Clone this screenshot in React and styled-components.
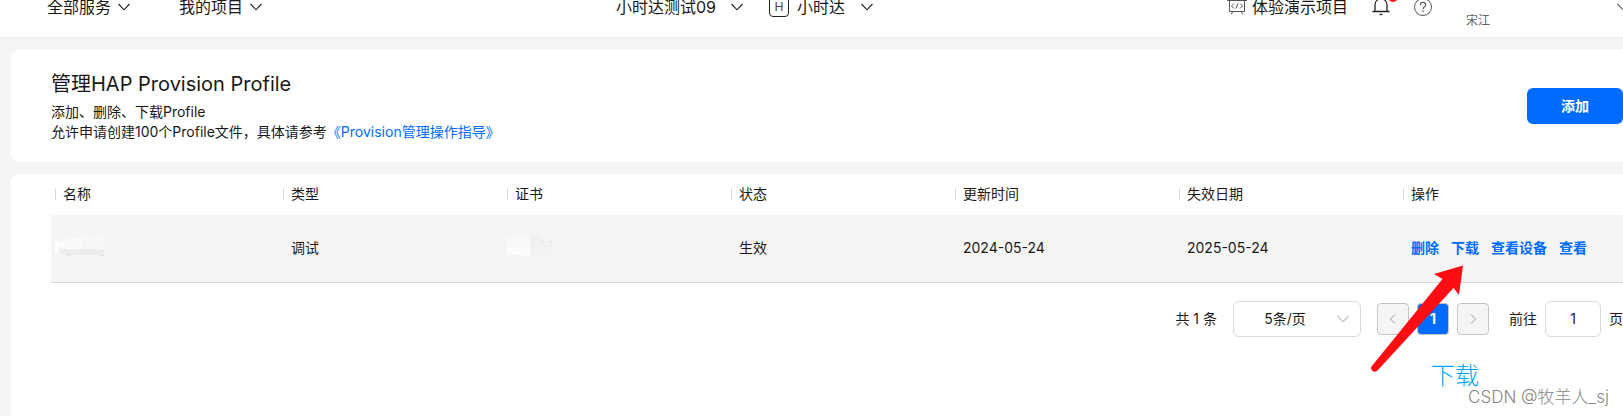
import { useState } from "react";
import styled, { createGlobalStyle } from "styled-components";

const columns = ["名称", "类型", "证书", "状态", "更新时间", "失效日期", "操作"];

const profiles = [
  {
    id: 1,
    type: "调试",
    status: "生效",
    updated: "2024-05-24",
    expires: "2025-05-24",
  },
];

const actions = ["删除", "下载", "查看设备", "查看"];

const Chevron = ({ size = 12, color = "#222" }) => (
  <svg width={size} height={size} viewBox="0 0 12 12" fill="none">
    <path d="M0.5 3L6 8.8L11.5 3" stroke={color} strokeWidth="1.1" />
  </svg>
);

const BoardIcon = () => (
  <svg width="20" height="20" viewBox="0 0 20 20" fill="none" stroke="#555">
    <path d="M0 3.5H20M2.5 3.5V14.5H17.5V3.5M6 14.5L4 17.5M14 14.5L16 17.5" />
    <path d="M7 6.5L4.5 9L7 11.5M13 6.5L15.5 9L13 11.5M11 6.5L9 11.5" />
  </svg>
);

const BellIcon = () => (
  <svg width="18" height="20" viewBox="0 0 18 20" fill="none" stroke="#222">
    <path
      d="M0.5 14.5H17.5M3 14.5V8C3 4.5 5.5 2 9 2S15 4.5 15 8V14.5"
      strokeWidth="1.3"
    />
    <path d="M7.5 17.5H10.5" strokeWidth="1.3" />
  </svg>
);

const HelpIcon = () => (
  <svg width="18" height="18" viewBox="1 1 18 18" fill="none" stroke="#555">
    <circle cx="10" cy="10" r="8.5" />
    <path
      d="M7.3 8.2C7.3 6.4 8.5 5.4 10 5.4S12.7 6.4 12.7 8C12.7 9.9 10 10 10 12.2"
      strokeWidth="1.1"
    />
    <path d="M10 13.6V15" strokeWidth="1.3" />
  </svg>
);

const NameMask = () => (
  <svg width="50" height="20" viewBox="0 0 50 20">
    <path d="M4 6L12 3L27 1V14H4Z" fill="#fafafa" />
    <path d="M27 1L49 0V14H27Z" fill="#f7f7f7" />
    <path d="M4 13H49V19H10L4 17Z" fill="#ededed" />
    <rect y="5" width="4" height="11" rx="1" fill="#fff" />
    <path d="M12 19.5H16M44 19.5H50" stroke="#e2e2e2" />
  </svg>
);

const CertMask = () => (
  <svg width="46" height="22" viewBox="0 0 46 22">
    <path d="M0 3L23 0V21L0 19Z" fill="#f9f9f9" />
    <path d="M0 12H23V21L0 19Z" fill="#fcfcfc" />
    <path d="M23 0H32L35 6H46V21H23Z" fill="#f1f1f1" />
    <path d="M23 12H46V21H23Z" fill="#f3f3f3" />
    <path d="M35 6.5H37M43 6.5H45" stroke="#d8d8d8" />
  </svg>
);

const App = () => {
  const [page, setPage] = useState("1");

  return (
    <Page>
      <GlobalStyle />
      <Header>
        <Group $gap="49px">
          <MenuButton>
            全部服务
            <Chevron />
          </MenuButton>
          <MenuButton>
            我的项目
            <Chevron />
          </MenuButton>
        </Group>
        <Group $gap="26px">
          <MenuButton $gap="15px">
            小时达测试09
            <Chevron />
          </MenuButton>
          <MenuButton $gap="16px">
            <AppName>
              <Badge>H</Badge>
              小时达
            </AppName>
            <Chevron />
          </MenuButton>
        </Group>
        <RightGroup>
          <MenuButton $gap="5px">
            <BoardIcon />
            体验演示项目
          </MenuButton>
          <IconButton aria-label="消息">
            <BellIcon />
            <Dot />
          </IconButton>
          <IconButton aria-label="帮助">
            <HelpIcon />
          </IconButton>
          <UserButton>
            <User>宋江</User>
            <Chevron color="#666" />
          </UserButton>
        </RightGroup>
      </Header>

      <Main>
        <Intro>
          <div>
            <Title>管理HAP Provision Profile</Title>
            <Text>添加、删除、下载Profile</Text>
            <Text>
              允许申请创建100个Profile文件，具体请参考
              <a href="#guide">《Provision管理操作指导》</a>
            </Text>
          </div>
          <AddButton>添加</AddButton>
        </Intro>

        <Content>
          <Table>
            <thead>
              <tr>
                {columns.map((name) => (
                  <th key={name}>
                    <HeadCell>{name}</HeadCell>
                  </th>
                ))}
              </tr>
            </thead>
            <tbody>
              {profiles.map((item) => (
                <tr key={item.id}>
                  <MaskCell>
                    <NameMask />
                  </MaskCell>
                  <td>{item.type}</td>
                  <MaskCell>
                    <CertMask />
                  </MaskCell>
                  <td>{item.status}</td>
                  <td>{item.updated}</td>
                  <td>{item.expires}</td>
                  <td>
                    <Actions>
                      {actions.map((action) => (
                        <a key={action} href="#profile">
                          {action}
                        </a>
                      ))}
                    </Actions>
                  </td>
                </tr>
              ))}
            </tbody>
          </Table>

          <Pagination>
            <span>共 1 条</span>
            <SelectWrap>
              <select aria-label="每页条数" defaultValue="5">
                <option value="5">5条/页</option>
                <option value="10">10条/页</option>
              </select>
              <SelectArrow>
                <Chevron color="#b8bcc4" />
              </SelectArrow>
            </SelectWrap>
            <Pager>
              <PageButton disabled aria-label="上一页">
                <svg width="12" height="12" viewBox="0 0 12 12" fill="none">
                  <path d="M8 1.5L3.5 6L8 10.5" stroke="#999" />
                </svg>
              </PageButton>
              <PageButton $active>1</PageButton>
              <PageButton disabled aria-label="下一页">
                <svg width="12" height="12" viewBox="0 0 12 12" fill="none">
                  <path d="M4 1.5L8.5 6L4 10.5" stroke="#999" />
                </svg>
              </PageButton>
            </Pager>
            <Jump>
              前往
              <input value={page} onChange={(e) => setPage(e.target.value)} />
              页
            </Jump>
          </Pagination>

          <Arrow width="96" height="110" viewBox="0 0 96 110">
            <path
              d="M93 1.5L64 10L72.5 15L1.5 102.5C-0.5 106 4.5 109.5 7.5 106.5L83.5 24L89 31Z"
              fill="#ff0d12"
            />
          </Arrow>
          <Note>下载</Note>
          <Watermark>CSDN @牧羊人_sj</Watermark>
        </Content>
      </Main>
    </Page>
  );
};

export default App;

const GlobalStyle = createGlobalStyle`
  * {
    box-sizing: border-box;
  }
  body {
    margin: 0;
    background: #f5f5f5;
    color: #191919;
    font-family: Inter, "Noto Sans CJK SC", sans-serif;
    font-size: 14px;
    line-height: 20px;
  }
  button, input, select {
    font: inherit;
    color: inherit;
  }
  button {
    padding: 0;
    border: 0;
    background: none;
    cursor: pointer;
  }
  a {
    color: #006cff;
    text-decoration: none;
  }
  svg {
    display: block;
    flex: none;
  }
`;

const Page = styled.div`
  display: flex;
  flex-direction: column;
  min-height: 100vh;
  overflow: hidden;
`;

const Header = styled.header`
  display: flex;
  align-items: center;
  justify-content: space-between;
  height: 64px;
  margin-top: -26px;
  margin-right: -6px;
  padding: 3px 0 0 47px;
  border-bottom: 1px solid #ebebeb;
  background: #fff;
`;

const Group = styled.div`
  display: flex;
  align-items: center;
  gap: ${(props) => props.$gap};
`;

const RightGroup = styled(Group)`
  gap: 24px;
`;

const MenuButton = styled.button`
  display: flex;
  align-items: center;
  gap: ${(props) => props.$gap || "7px"};
  font-size: 16px;
  line-height: 24px;
  white-space: nowrap;
`;

const AppName = styled.span`
  display: flex;
  align-items: center;
  gap: 8px;
`;

const Badge = styled.span`
  width: 20px;
  height: 20px;
  border: 1px solid #222;
  border-radius: 4px;
  color: #444;
  font-size: 12px;
  line-height: 18px;
  text-align: center;
`;

const IconButton = styled.button`
  position: relative;
`;

const Dot = styled.i`
  position: absolute;
  top: -5px;
  right: -8px;
  width: 10px;
  height: 10px;
  border-radius: 50%;
  background: #ff0d12;
`;

const UserButton = styled.button`
  display: flex;
  align-items: center;
  justify-content: space-between;
  width: 163px;
  margin-left: 10px;
`;

const User = styled.span`
  padding-top: 28px;
  color: #666;
  font-size: 12px;
  line-height: 18px;
`;

const Main = styled.main`
  flex: 1;
  display: flex;
  flex-direction: column;
  gap: 12px;
  padding: 12px 0 0 11px;
`;

const Intro = styled.section`
  display: flex;
  align-items: center;
  justify-content: space-between;
  padding: 20px 0 20px 40px;
  border-radius: 8px 0 0 8px;
  background: #fff;
`;

const Title = styled.h1`
  margin: 0 0 4px;
  font-size: 20px;
  font-weight: 400;
  line-height: 28px;
`;

const Text = styled.p`
  margin: 0;
`;

const AddButton = styled.button`
  width: 96px;
  height: 36px;
  border-radius: 6px;
  background: #006cff;
  color: #fff;
  font-weight: 700;
`;

const Content = styled.section`
  position: relative;
  flex: 1;
  padding-left: 40px;
  border-radius: 8px 0 0 0;
  background: #fff;
`;

const Table = styled.table`
  width: 100%;
  table-layout: fixed;
  border-collapse: collapse;

  th {
    width: 14.25%;
    height: 41px;
    padding: 0 0 2px 4px;
    font-weight: 400;
    text-align: left;
  }
  th:first-child {
    width: auto;
  }
  td {
    height: 67px;
    padding: 0 0 0 12px;
    border-bottom: 1px solid #d9d9d9;
    background: #f5f5f5;
  }
`;

const HeadCell = styled.div`
  display: flex;
  align-items: center;
  gap: 7px;

  &::before {
    content: "";
    width: 1px;
    height: 12px;
    background: #d9d9d9;
  }
`;

const MaskCell = styled.td`
  && {
    padding: 0 0 4px 4px;
  }
`;

const Actions = styled.div`
  display: flex;
  gap: 12px;
  font-weight: 700;
  white-space: nowrap;
`;

const Pagination = styled.div`
  display: flex;
  align-items: center;
  justify-content: flex-end;
  gap: 16px;
  margin-top: 18px;
`;

const SelectWrap = styled.div`
  position: relative;

  select {
    display: block;
    width: 128px;
    height: 36px;
    padding: 0 24px 0 0;
    border: 1px solid #d8d9e3;
    border-radius: 6px;
    background: #fff;
    appearance: none;
    text-align-last: center;
  }
`;

const SelectArrow = styled.span`
  position: absolute;
  top: 12px;
  right: 12px;
  pointer-events: none;
`;

const Pager = styled.div`
  display: flex;
  gap: 8px;
`;

const PageButton = styled.button`
  display: flex;
  align-items: center;
  justify-content: center;
  width: 32px;
  height: 32px;
  border: 1px solid #c4c4c4;
  border-radius: 4px;
  background: ${(props) => (props.$active ? "#006cff" : "#f5f5f5")};
  color: #fff;
  font-weight: 700;
`;

const Jump = styled.label`
  display: flex;
  align-items: center;
  gap: 8px;
  margin-left: 4px;

  input {
    width: 56px;
    height: 36px;
    border: 1px solid #d8d9e3;
    border-radius: 6px;
    text-align: center;
  }
`;

const Arrow = styled.svg`
  position: absolute;
  top: 90px;
  right: 157px;
  pointer-events: none;
`;

const Note = styled.span`
  position: absolute;
  top: 186px;
  right: 144px;
  color: #00a6ff;
  font-size: 24px;
  font-weight: 300;
  line-height: 32px;
`;

const Watermark = styled.span`
  position: absolute;
  top: 211px;
  right: 14px;
  color: #888;
  font-size: 17px;
  font-weight: 300;
  line-height: 24px;
`;
